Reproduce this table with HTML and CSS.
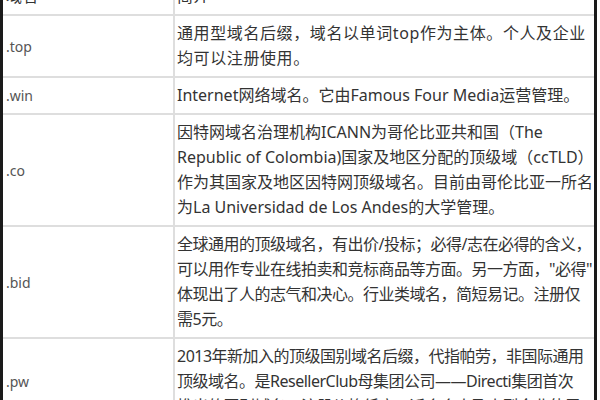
FILE: index.html
```html
<!DOCTYPE html>
<html lang="zh-CN">
<head>
    <meta charset="UTF-8">
    <meta name="viewport" content="width=device-width, initial-scale=1.0">
    <title>新顶级域名简介</title>
    <link rel="stylesheet" href="styles.css">
</head>

<body>
    <table class="domains">
        <tr>
            <th class="name">域名</th>
            <th class="desc">简介</th>
        </tr>
        <tr>
            <td class="name">.top</td>
            <td class="desc loose">通用型域名后缀，域名以单词top作为主体。个人及企业<br>均可以注册使用。</td>
        </tr>
        <tr>
            <td class="name">.win</td>
            <td class="desc">Internet网络域名。它由Famous Four Media运营管理。</td>
        </tr>
        <tr>
            <td class="name">.co</td>
            <td class="desc">因特网域名治理机构ICANN为哥伦比亚共和国（The<br>Republic of Colombia)国家及地区分配的顶级域（ccTLD）<br>作为其国家及地区因特网顶级域名。目前由哥伦比亚一所名<br>为La Universidad de Los Andes的大学管理。</td>
        </tr>
        <tr>
            <td class="name">.bid</td>
            <td class="desc tight">全球通用的顶级域名，有出价/投标；必得/志在必得的含义，<br>可以用作专业在线拍卖和竞标商品等方面。另一方面，"必得"<br>体现出了人的志气和决心。行业类域名，简短易记。注册仅<br>需5元。</td>
        </tr>
        <tr>
            <td class="name">.pw</td>
            <td class="desc tight">2013年新加入的顶级国别域名后缀，代指帕劳，非国际通用<br>顶级域名。是ResellerClub母集团公司——Directi集团首次<br>推出的国别域名，注册价格低廉，适合个人及小型企业使用。</td>
        </tr>
    </table>
</body>

</html>
```

FILE: styles.css
```css
body {
    margin: 0;
    background: white;
    overflow: hidden;
}

.domains {
    border-collapse: separate;
    border-spacing: 0;
    table-layout: fixed;
    width: 597px;
    margin-top: -21px;
    border-left: 3px solid #1a1a1a;
    border-right: 3px solid #1a1a1a;
    font-family: "Noto Sans", "Noto Sans CJK SC", sans-serif;
    font-size: 16px;
    line-height: 25px;
    color: #333;
}

.domains th,
.domains td {
    border-bottom: 2px solid #dedede;
    padding: 5px 0 5px 2px;
    text-align: left;
    font-weight: normal;
    vertical-align: middle;
    white-space: nowrap;
    overflow: hidden;
}

.domains .name {
    width: 167px;
    padding-left: 3px;
    border-right: 2px solid #dedede;
}

.domains td.name {
    font-size: 14px;
    color: #555;
}

.desc.loose {
    letter-spacing: 0.6px;
}

.desc.tight {
    letter-spacing: -0.5px;
}
```
